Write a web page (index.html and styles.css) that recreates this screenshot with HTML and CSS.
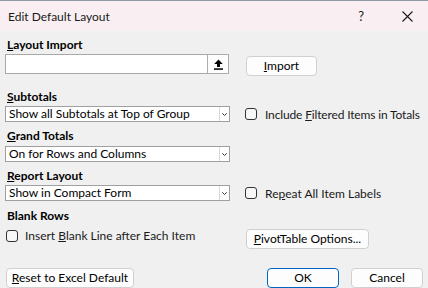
FILE: index.html
```html
<!DOCTYPE html>
<html>
<head>
<meta charset="utf-8">
<link rel="stylesheet" href="styles.css">
</head>
<body>
<div class="titlebar">
  <span class="title">Edit Default Layout</span>
  <span class="help">?</span>
  <span class="close"><svg width="11" height="11" viewBox="0 0 11 11"><path d="M0.5 0.5L10.5 10.5M10.5 0.5L0.5 10.5" stroke="#1a1a1a" stroke-width="1.1" fill="none"/></svg></span>
</div>
<div class="content">
  <div class="label l-import"><u>L</u>ayout Import</div>
  <div class="row import-row">
    <div class="input">
      <span class="upload"><svg width="9" height="11" viewBox="0 0 9 11"><path d="M4.5 0.5L8.8 5H6V8H3V5H0.2Z" fill="#000"/><rect x="0" y="9.3" width="9" height="1.5" fill="#000"/></svg></span>
    </div>
    <button class="btn btn-import"><u>I</u>mport</button>
  </div>

  <div class="label l-sub"><u>S</u>ubtotals</div>
  <div class="row sel-row1">
    <div class="select"><span class="sel-text">Show all Subtotals at Top of Group</span><span class="arrow"><svg width="5" height="3" viewBox="0 0 5 3"><path d="M0.3 0.3L2.5 2.5L4.7 0.3" stroke="#333" stroke-width="1" fill="none"/></svg></span></div>
    <label class="check right"><span class="box"></span><span class="tight">Include <u>F</u>iltered Items in Totals</span></label>
  </div>

  <div class="label l-grand"><u>G</u>rand Totals</div>
  <div class="row sel-row2">
    <div class="select"><span class="sel-text">On for Rows and Columns</span><span class="arrow"><svg width="5" height="3" viewBox="0 0 5 3"><path d="M0.3 0.3L2.5 2.5L4.7 0.3" stroke="#333" stroke-width="1" fill="none"/></svg></span></div>
  </div>

  <div class="label l-report"><u>R</u>eport Layout</div>
  <div class="row sel-row3">
    <div class="select"><span class="sel-text">Show in Compact Form</span><span class="arrow"><svg width="5" height="3" viewBox="0 0 5 3"><path d="M0.3 0.3L2.5 2.5L4.7 0.3" stroke="#333" stroke-width="1" fill="none"/></svg></span></div>
    <label class="check right"><span class="box"></span><span>Re<u>p</u>eat All Item Labels</span></label>
  </div>

  <div class="label l-blank">Blank Rows</div>
  <div class="row blank-row">
    <label class="check left-check"><span class="box"></span><span>Insert <u>B</u>lank Line after Each Item</span></label>
    <button class="btn btn-pivot"><u>P</u>ivotTable Options...</button>
  </div>

  <div class="row bottom-row">
    <button class="btn btn-reset"><u>R</u>eset to Excel Default</button>
    <button class="btn btn-ok">OK</button>
    <button class="btn btn-cancel">Cancel</button>
  </div>
</div>
</body>
</html>
```

FILE: styles.css
```css
* { box-sizing: border-box; }
html, body { margin: 0; padding: 0; }
body {
  width: 428px;
  height: 288px;
  overflow: hidden;
  background: #f0f0f0;
  font-family: Lato, "Noto Sans", sans-serif;
  font-size: 12px;
  color: #000;
}
u { text-decoration: underline; text-underline-offset: 1px; }

.titlebar {
  height: 31px;
  background: #f9eff2;
  border-top: 1px solid #8e9aa6;
  display: flex;
  align-items: center;
  padding-left: 8px;
}
.title { flex: 1; color: #1a1a1a; font-size: 12px; }
.help { margin-right: 38px; font-size: 13px; color: #1a1a1a; }
.close { width: 11px; height: 11px; margin-right: 15px; display: flex; }

.content { padding: 0 5px; display: flex; flex-direction: column; }
.row { display: flex; align-items: center; }

.label { font-weight: 700; line-height: 16px; height: 16px; padding-left: 2px; }
.l-import { margin-top: 6px; }
.l-sub { margin-top: 13px; }
.l-grand { margin-top: 6px; }
.l-report { margin-top: 6px; }
.l-blank { margin-top: 7px; }

.import-row { margin-top: 1px; align-items: flex-start; height: 22px; }
.input {
  flex: none;
  width: 224px;
  height: 20px;
  background: #fff;
  border: 1px solid #a8a8a8;
  display: flex;
  justify-content: flex-end;
}
.upload {
  width: 22px;
  height: 20px;
  margin: -1px -1px 0 0;
  border: 1px solid #adadad;
  background: #fdfdfd;
  display: flex;
  align-items: center;
  justify-content: center;
}
.btn {
  flex: none;
  font-family: inherit;
  font-size: 12px;
  color: #000;
  background: #fdfdfd;
  border: 1px solid #d0d0d0;
  border-radius: 4px;
  height: 20px;
  padding: 0;
  line-height: 18px;
}
.btn-import { width: 71px; margin-left: 17px; margin-top: 2px; }

.select {
  flex: none;
  width: 225px;
  height: 16px;
  background: #fff;
  border: 1px solid #a0a0a0;
  display: flex;
  align-items: center;
}
.sel-text { flex: 1; padding-left: 3px; line-height: 14px; white-space: nowrap; overflow: hidden; }
.arrow {
  width: 10px;
  height: 14px;
  border-left: 1px solid #dadada;
  display: flex;
  align-items: center;
  justify-content: center;
}
.sel-row1 { margin-top: 1px; }
.sel-row2 { margin-top: 2px; }
.sel-row3 { margin-top: 1px; }

.check { display: flex; align-items: center; gap: 8px; color: #1a1a1a; white-space: nowrap; }
.check.right { margin-left: 15px; }
.tight { letter-spacing: -0.15px; }
.box {
  width: 12px;
  height: 12px;
  border: 1px solid #333;
  border-radius: 3px;
  background: #f7f7f7;
  flex: none;
}
.blank-row { margin-top: 5px; align-items: flex-start; height: 20px; }
.left-check { flex: none; width: 225px; margin-left: 1px; gap: 7px; height: 13px; }
.btn-pivot { width: 123px; margin-left: 15px; }

.bottom-row { margin-top: 19px; }
.btn-reset { width: 128px; margin-left: 1px; }
.btn-ok { width: 72px; margin-left: auto; border-color: #0067c0; }
.btn-cancel { width: 72px; margin-left: 12px; }
```
